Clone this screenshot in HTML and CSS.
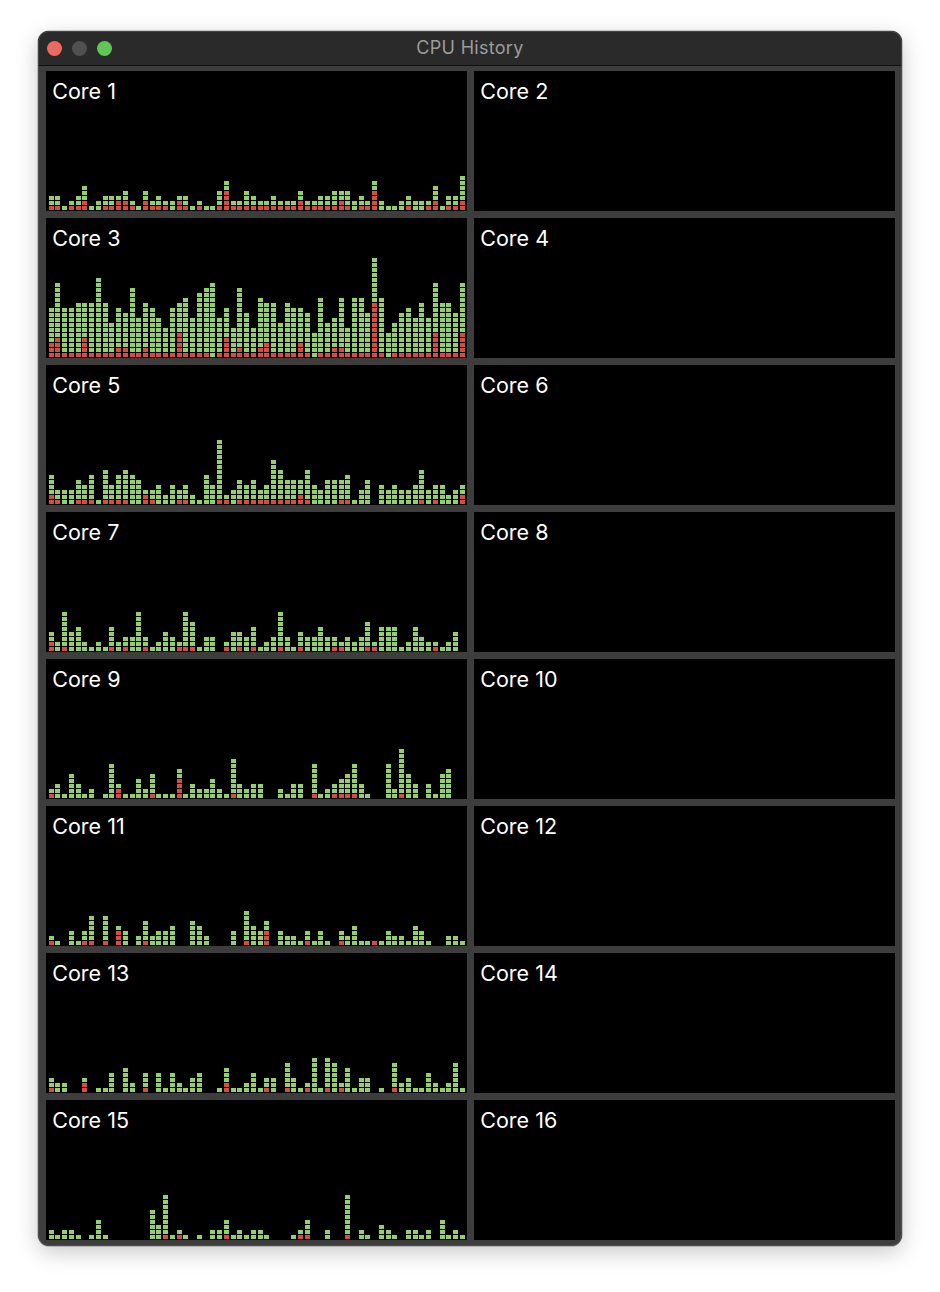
FILE: index.html
```html
<!DOCTYPE html>
<html lang="en">
<head>
<meta charset="utf-8">
<title>CPU History</title>
<link rel="stylesheet" href="styles.css">
</head>
<body>
<main class="window">
  <header class="titlebar">
    <div class="lights">
      <span class="light light-close"></span>
      <span class="light light-min"></span>
      <span class="light light-zoom"></span>
    </div>
    <h1 class="title">CPU History</h1>
  </header>
  <section class="cores" id="cores"></section>
</main>
<script src="script.js"></script>
</body>
</html>
```

FILE: styles.css
```css
* { box-sizing: border-box; }
html, body { margin: 0; background: #fff; }
body {
  width: 940px;
  height: 1292px;
  padding: 31px 38px 0;
  font-family: Inter, "Liberation Sans", sans-serif;
  overflow: hidden;
}
.window {
  width: 864px;
  height: 1215px;
  border-radius: 11px;
  background: #3d3d3d;
  overflow: hidden;
  box-shadow: 0 0 0 0.5px rgba(0,0,0,.35), 0 6px 22px rgba(0,0,0,.22);
  outline: 1px solid rgba(90,90,90,.6);
  outline-offset: -1px;
}
.titlebar {
  height: 34px;
  background: #2a2a2a;
  border-bottom: 1px solid #111;
  display: grid;
  grid-template-columns: 1fr auto 1fr;
  align-items: center;
  padding: 0 9px;
  box-sizing: content-box;
}
.lights { display: flex; gap: 10px; }
.light { width: 15px; height: 15px; border-radius: 50%; }
.light-close { background: #ec6a5e; }
.light-min { background: #505050; }
.light-zoom { background: #61c554; }
.title {
  margin: 0 0 2px;
  font-size: 18px;
  font-weight: 400;
  color: #9c9c9c;
  letter-spacing: .3px;
}
.cores {
  display: grid;
  grid-template-columns: 421px 421px;
  grid-auto-rows: 140px;
  gap: 7px;
  padding: 5px 7px 0 8px;
}
.core {
  background: #000;
  display: flex;
  flex-direction: column;
  justify-content: space-between;
  padding: 8px 2px 1px 2.65px;
}
.core-label {
  font-size: 21.5px;
  line-height: 25px;
  color: #fff;
  padding-left: 3.6px;
}
.bars {
  display: grid;
  grid-template-columns: repeat(62, 1fr);
  column-gap: 1.58px;
  align-items: end;
  filter: blur(.3px);
}
.bar {
  display: flex;
  flex-direction: column-reverse;
  gap: 1px;
}
.cell { width: 5px; height: 4px; background: #93d06c; }
.cell-sys { background: #d84c42; }
```

FILE: script.js
```js
var HISTORY = {
  1: "3/1 3/1 1 2/1 3/1 5/2 1 2 3/1 3/1 3/2 4/2 2/1 1 4/2 2/1 3/1 2/1 2 3/2 3/1 1 2/1 1 1 4/1 6/4 2/1 2/1 4/1 3/1 2/1 2/1 3/1 2/1 2/1 2/1 4/2 2/1 2/1 3/1 3/1 4/1 4/2 4/1 2 3/1 2/1 6/4 2 1 1 2 3/1 2 2 2/1 5/2 1 3/1 3/1 7/2",
  3: "10/3 15/4 10/1 10/1 11/1 11/4 11/1 16/1 11/1 7/1 10/2 9/2 14/1 8/1 11/2 10/1 8/1 6/1 10/1 11/5 12/1 8/1 13/1 14/1 15 8/1 10/4 6/1 14/2 9/1 6/1 12/2 11/3 11/1 7/1 11/1 10/1 10/3 9/1 5 12/1 7/1 8/2 12/2 6/1 12/1 12/1 9/1 20/11 12/1 5 7/1 9/1 10/1 8/1 11/1 8/1 15/5 11/1 11/1 9/1 15/5",
  5: "6/2 3/1 3 3 5/1 4/1 6/1 1 7/1 4/1 6/1 7/1 6 5 3/2 3/1 4 2 4 3/1 4/1 2 1 6 4 13/1 2/1 3 5/1 4/1 5/1 3/1 4/1 9/1 7/1 5/1 5/1 5/2 7/1 4 3 5 5 5/1 6/1 1 3 5 0 4 3 4 3 3 4 7/1 3 4/1 4 2 3 4/2",
  7: "4/2 2 8/1 4 5 2 1 2 1 5/1 2 3/1 3 8 3/1 1 2 4 3 2/1 8/1 6/1 1 3 3 0 2/1 4 4/1 3 5/1 1 2 3 8/1 3 1 4/1 3 3 5 3 3/1 2/1 3 2 3 6/1 2/1 5 5 5 1 2 5 3 2 2/1 1 2 4 0",
  9: "2/1 3 1 5 3 1 2 0 1 7 3/2 1 1 4 2 5/1 1 1 1 6/4 1 3 2 2 4 2 1 8/1 3 2 3 3 0 0 2 1 3 3 0 7/1 1 2 3/1 4/1 5/1 7/1 3 1 0 0 7 2 10/1 5 3 0 3 1 5 6 0 0",
  11: "2/1 1 0 3 1 3/1 6/1 0 6/1 0 4/3 3 0 2 5/1 2 3 3 4 0 0 5 4 2 0 0 0 3 0 7/1 4 3 5/3 0 3 2 2 1 3/1 1 3 1 0 3/1 2 4 1 1 1/1 1 3 2 2 1 4 3 1 0 0 2 2 1",
  13: "3/1 2 2 0 0 3/2 0 1 1 4 0 5 2 0 4/1 0 4 1 4 2 1 3 4 0 0 1 5/2 1 1 2 4 1 3/1 3 0 6/1 3 1 2/1 7 1 7/1 6 2/1 5 1 3 3 0 1 0 6/1 2 3 1 1 4 2 1 2 6 1",
  15: "2 1 2 2 1 0 1 4 1 0 0 0 0 0 0 6 3 9/1 1 2/1 1 0 1 0 2 2 4/1 1 2 1 2 2 1 0 0 0 1 2/1 4/1 0 0 2 0 0 9/1 0 2 1 0 3 2 1 0 2 2 1 2 0 4 1 2 1"
};

function el(cls, parent) {
  var node = document.createElement("div");
  node.className = cls;
  parent.appendChild(node);
  return node;
}

var cores = document.getElementById("cores");
for (var i = 1; i <= 16; i++) {
  var core = el("core", cores);
  el("core-label", core).textContent = "Core " + i;
  if (!HISTORY[i]) continue;
  var bars = el("bars", core);
  HISTORY[i].split(" ").forEach(function (entry) {
    var parts = entry.split("/");
    var total = +parts[0], sys = +(parts[1] || 0);
    var bar = el("bar", bars);
    for (var n = 0; n < total; n++) {
      el(n < sys ? "cell cell-sys" : "cell", bar);
    }
  });
}
```
